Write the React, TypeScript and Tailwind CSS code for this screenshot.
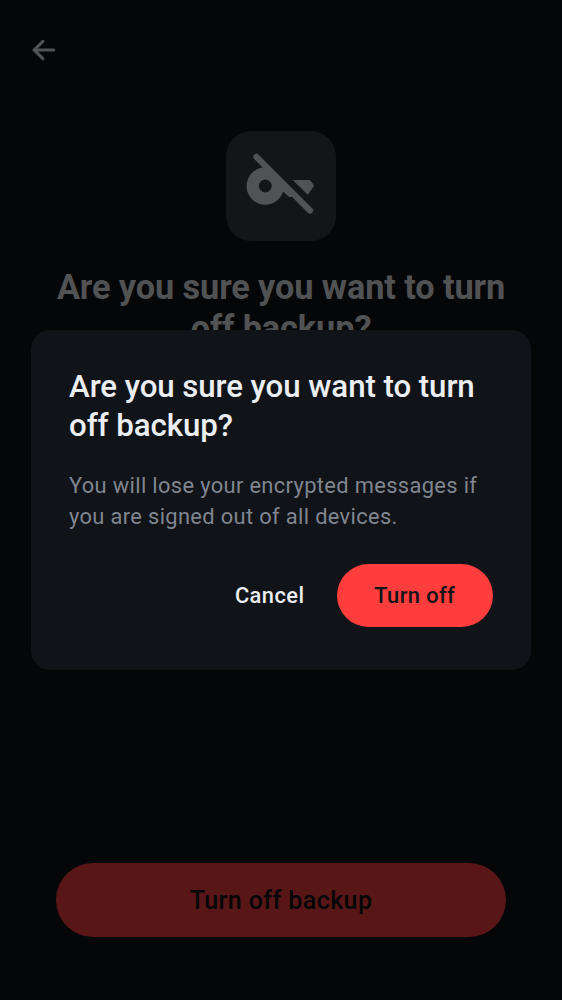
export default function App() {
  return (
    <main className="relative h-[1000px] w-[562px] overflow-hidden bg-[#050608] font-['Roboto',sans-serif]">
      <div className="flex h-full flex-col">
        <header className="flex h-[100px] items-center pl-[28px]">
          <svg width="30" height="30" viewBox="0 0 30 30" fill="none" stroke="#515253" strokeWidth="3.1" strokeLinecap="round" strokeLinejoin="miter" aria-label="Back">
            <path d="M14.9 6.3L6.2 15l8.7 8.7M7 15h18.7" />
          </svg>
        </header>
        <section className="flex flex-1 flex-col items-center pt-[31px]">
          <div className="flex size-[110px] rounded-[25px] bg-[#141518]">
            <svg width="110" height="110" viewBox="0 0 110 110" fill="#515253">
              <path fillRule="evenodd" d="M57.9 53.5A18.7 18.7 0 1 1 40.8 36.4ZM39.3 48.6a6.4 6.4 0 1 0 0 12.8a6.4 6.4 0 0 0 0-12.8z" />
              <path d="M56 51.5V59.4l7 6.6h4.6l3-1.5z" />
              <path d="M66.7 49H82.8q1 0 1.6.8l3 3.6q.9 1.2.1 2.4l-5.8 7.9z" />
              <path d="M30.4 25.9L84 79.5" stroke="#515253" strokeWidth="6.2" strokeLinecap="round" />
            </svg>
          </div>
          <h1 className="mt-[26px] text-center text-[34.375px] leading-[41px] font-bold tracking-[-0.13px] whitespace-nowrap text-[#515253]">Are you sure you want to turn<br />off backup?</h1>
        </section>
        <footer className="px-[56.25px] pb-[63px]">
          <button className="block h-[74.5px] w-full rounded-full bg-[#581616] pt-px text-[25px] font-medium tracking-[0.4px] text-[#050608]">Turn off backup</button>
        </footer>
      </div>
      <div className="absolute inset-0 flex items-center justify-center">
        <div role="dialog" className="h-[340px] w-[500px] rounded-[19px] bg-[#101317] px-[38px] pt-[37px]">
          <h2 className="text-[31.25px] leading-[39px] font-medium tracking-[-0.08px] whitespace-nowrap text-[#ebeef2]">Are you sure you want to turn<br />off backup?</h2>
          <p className="mt-[24.5px] text-[21.875px] leading-[31.25px] tracking-[0.35px] whitespace-nowrap text-[#808690]">You will lose your encrypted messages if<br />you are signed out of all devices.</p>
          <div className="mt-[32px] flex items-center justify-end gap-[32px]">
            <button className="pt-[2.5px] text-[21.875px] font-medium tracking-[0.45px] text-[#ebeef2]">Cancel</button>
            <button className="h-[62.5px] w-[156.5px] rounded-full bg-[#ff3d3d] pt-[2.5px] text-[21.875px] font-medium tracking-[0.4px] text-[#101317]">Turn off</button>
          </div>
        </div>
      </div>
    </main>
  );
}
